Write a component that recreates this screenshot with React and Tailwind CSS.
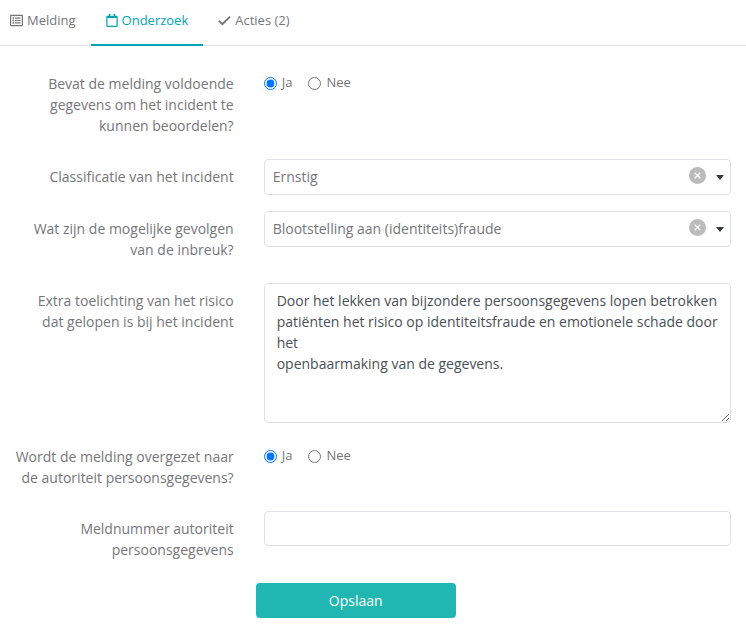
import { useState } from 'react';
import { FaRegCalendar, FaRegListAlt } from 'react-icons/fa';

const CheckIcon = () => (
  <svg viewBox="0 0 13 13" className="h-[13px] w-[13px] shrink-0" fill="none" stroke="currentColor" strokeWidth="1.9" aria-hidden="true">
    <path d="M1 6.8 4.4 10.2 12 2.6" />
  </svg>
);

const tabs = [
  { id: 'melding', label: 'Melding', icon: <FaRegListAlt className="h-[13px] w-[13px]" /> },
  { id: 'onderzoek', label: 'Onderzoek', icon: <FaRegCalendar className="h-[13px] w-3" /> },
  { id: 'acties', label: 'Acties (2)', icon: <CheckIcon /> },
];

function Row({ label, htmlFor, id, children }) {
  return (
    <div className="grid grid-cols-[1fr_2fr]">
      <label id={id} htmlFor={htmlFor} className="px-[15px] py-[7px] text-right leading-[21px]">
        {label}
      </label>
      <div className="min-w-0 px-[15px]">{children}</div>
    </div>
  );
}

function YesNo({ name, labelledBy }) {
  const [value, setValue] = useState('Ja');

  return (
    <div role="radiogroup" aria-labelledby={labelledBy} className="flex gap-4 pt-[6px] text-[13px] leading-5">
      {['Ja', 'Nee'].map((option) => (
        <label key={option} className="flex items-center gap-[5px]">
          <input
            type="radio"
            name={name}
            value={option}
            checked={value === option}
            onChange={() => setValue(option)}
            className="mt-[2px] h-[13px] w-[13px]"
          />
          {option}
        </label>
      ))}
    </div>
  );
}

function ClearableSelect({ id, options }) {
  const [value, setValue] = useState(options[0]);

  return (
    <div className="relative">
      <select
        id={id}
        value={value}
        onChange={(e) => setValue(e.target.value)}
        className="block h-9 w-full appearance-none rounded-[4px] border border-[#dee2e6] bg-white pr-12 pb-[2px] pl-2 leading-[21px]"
      >
        <option value=""></option>
        {options.map((option) => (
          <option key={option} value={option}>{option}</option>
        ))}
      </select>
      <button
        type="button"
        aria-label="Wissen"
        onClick={() => setValue('')}
        className="absolute top-2 right-[25px] flex h-[17px] w-[17px] items-center justify-center rounded-full bg-[#bbbbbb] text-white"
      >
        <svg viewBox="0 0 7 7" className="h-[7px] w-[7px]" stroke="currentColor" strokeWidth="1.4" aria-hidden="true">
          <path d="M.7.7 6.3 6.3M6.3.7.7 6.3" />
        </svg>
      </button>
      <svg viewBox="0 0 8 5" className="pointer-events-none absolute top-4 right-[7px] h-[5px] w-2" fill="#343a40" aria-hidden="true">
        <path d="M0 0h8L4 5z" />
      </svg>
    </div>
  );
}

export default function App() {
  const [active, setActive] = useState('onderzoek');
  const [toelichting, setToelichting] = useState(
    'Door het lekken van bijzondere persoonsgegevens lopen betrokken patiënten het risico op identiteitsfraude en emotionele schade door het\nopenbaarmaking van de gegevens.'
  );
  const [meldnummer, setMeldnummer] = useState('');

  return (
    <div className="bg-white font-['Open_Sans',sans-serif] text-sm text-[#76767a]">
      <div role="tablist" className="flex h-[46px] border-b border-[#dee2e6] pl-[10px] text-[13px]">
        {tabs.map((tab) => (
          <button
            key={tab.id}
            type="button"
            role="tab"
            aria-selected={active === tab.id}
            onClick={() => setActive(tab.id)}
            className={`-mb-px flex items-center gap-1 border-b-2 px-[15px] pb-1 first:pl-0 ${
              active === tab.id ? 'border-[#00a5b5] text-[#00a5b5]' : 'border-transparent'
            }`}
          >
            {tab.icon}
            {tab.label}
          </button>
        ))}
      </div>

      <form className="flex flex-col gap-4 pt-5 pb-2" onSubmit={(e) => e.preventDefault()}>
        <Row id="voldoende-label" label="Bevat de melding voldoende gegevens om het incident te kunnen beoordelen?">
          <YesNo name="voldoende" labelledBy="voldoende-label" />
        </Row>
        <Row label="Classificatie van het incident" htmlFor="classificatie">
          <ClearableSelect id="classificatie" options={['Ernstig']} />
        </Row>
        <Row label="Wat zijn de mogelijke gevolgen van de inbreuk?" htmlFor="gevolgen">
          <ClearableSelect id="gevolgen" options={['Blootstelling aan (identiteits)fraude']} />
        </Row>
        <Row label="Extra toelichting van het risico dat gelopen is bij het incident" htmlFor="toelichting">
          <textarea
            id="toelichting"
            value={toelichting}
            onChange={(e) => setToelichting(e.target.value)}
            className="block h-[140px] w-full resize rounded-[4px] border border-[#dee2e6] px-3 py-[6px] leading-[21px] text-[#495057]"
          />
        </Row>
        <Row id="autoriteit-label" label="Wordt de melding overgezet naar de autoriteit persoonsgegevens?">
          <YesNo name="autoriteit" labelledBy="autoriteit-label" />
        </Row>
        <Row label="Meldnummer autoriteit persoonsgegevens" htmlFor="meldnummer">
          <input
            id="meldnummer"
            type="text"
            value={meldnummer}
            onChange={(e) => setMeldnummer(e.target.value)}
            className="block h-[35px] w-full rounded-[4px] border border-[#dee2e6] px-3 text-[#495057]"
          />
        </Row>
        <div className="grid grid-cols-[1fr_2fr]">
          <div className="col-start-2 pl-[7px]">
            <button type="submit" className="h-[35px] w-[200px] rounded-[4px] bg-[#20b7b2] text-white">
              Opslaan
            </button>
          </div>
        </div>
      </form>
    </div>
  );
}
